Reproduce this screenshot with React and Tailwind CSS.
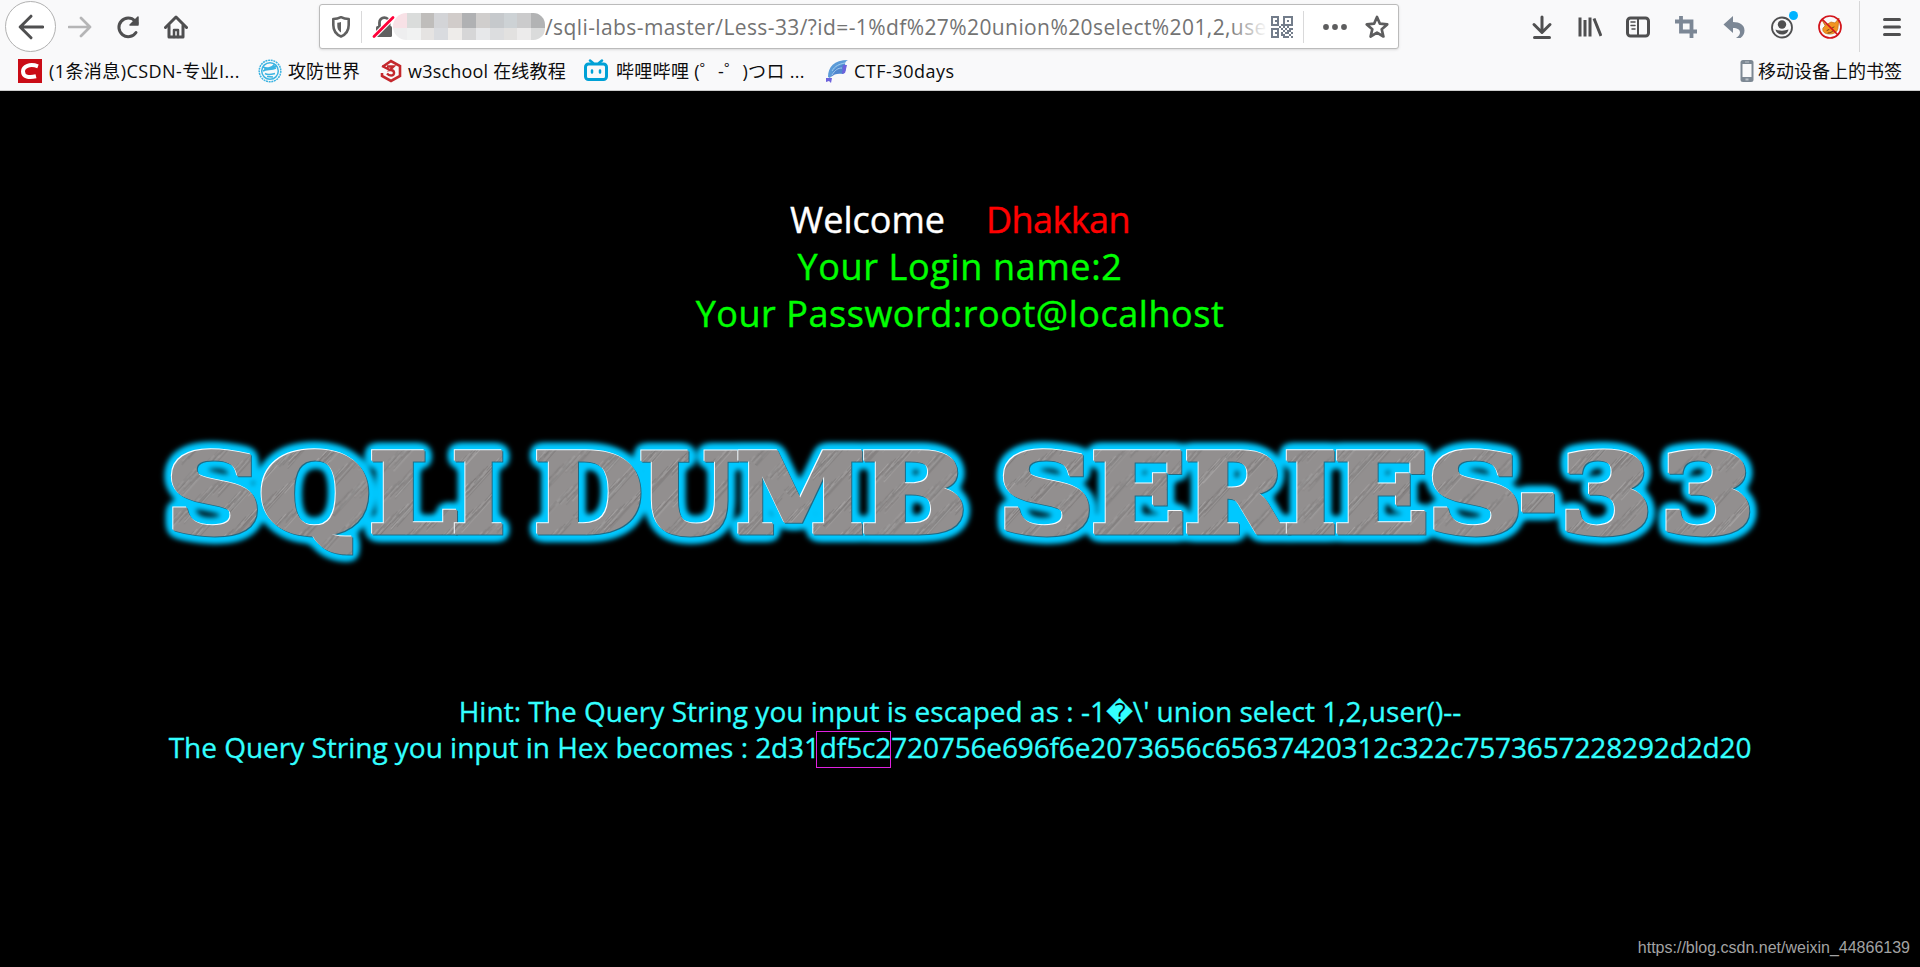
const ICON = "#4f4f50";

// x = left edge of the glyph box, w = width it is fitted to
const LETTERS = [
  { ch: "S", x: 166, w: 96 },
  { ch: "Q", x: 259, w: 112 },
  { ch: "L", x: 369, w: 88 },
  { ch: "I", x: 452, w: 53 },
  { ch: "D", x: 534, w: 109 },
  { ch: "U", x: 640, w: 98 },
  { ch: "M", x: 736, w: 129 },
  { ch: "B", x: 861, w: 106 },
  { ch: "S", x: 998, w: 96 },
  { ch: "E", x: 1091, w: 95 },
  { ch: "R", x: 1184, w: 103 },
  { ch: "I", x: 1284, w: 53 },
  { ch: "E", x: 1334, w: 95 },
  { ch: "S", x: 1427, w: 96 },
  { ch: "-", x: 1519, w: 38 },
  { ch: "3", x: 1560, w: 93 },
  { ch: "3", x: 1660, w: 95 },
];

// short scratches for the brushed metal fill
const SCRATCHES = Array.from({ length: 420 }, (_, i) => ({
  x: (i * 37.73) % 140,
  y: (i * 61.37) % 160,
  len: 14 + ((i * 29) % 44),
  light: (i * 13) % 5 < 2,
  o: 0.12 + ((i * 7) % 5) * 0.06,
}));

function Banner() {
  return (
    <svg
      className="block w-full h-[160px]"
      viewBox="0 420 1920 160"
      aria-label="SQLI DUMB SERIES-33"
    >
      <defs>
        <filter id="glow" x="-5%" y="-30%" width="110%" height="160%" colorInterpolationFilters="sRGB">
          <feGaussianBlur in="SourceAlpha" stdDeviation="5" />
          <feComponentTransfer>
            <feFuncA type="linear" slope="8" intercept="-0.1" />
          </feComponentTransfer>
          <feGaussianBlur stdDeviation="2" result="spread" />
          <feFlood floodColor="#00c8ff" />
          <feComposite in2="spread" operator="in" result="halo" />
          <feMerge>
            <feMergeNode in="halo" />
            <feMergeNode in="SourceGraphic" />
          </feMerge>
        </filter>
        <filter id="bevel" x="-10%" y="-10%" width="120%" height="120%" colorInterpolationFilters="sRGB">
          <feOffset in="SourceAlpha" dx="1" dy="1" result="a" />
          <feFlood floodColor="#1f6b85" />
          <feComposite in2="a" operator="in" result="dark" />
          <feOffset in="SourceAlpha" dx="-1.2" dy="-1.2" result="b" />
          <feFlood floodColor="#f4fbff" />
          <feComposite in2="b" operator="in" result="light" />
          <feMerge>
            <feMergeNode in="dark" />
            <feMergeNode in="light" />
            <feMergeNode in="SourceGraphic" />
          </feMerge>
        </filter>
        <pattern
          id="metal"
          width="140"
          height="160"
          patternUnits="userSpaceOnUse"
          patternTransform="rotate(42)"
        >
          <rect width="140" height="160" fill="#928f8f" />
          {SCRATCHES.map((s, i) => (
            <rect
              key={i}
              x={s.x}
              y={s.y}
              width="0.8"
              height={s.len}
              fill={s.light ? "#d4d1d1" : "#555252"}
              opacity={s.o}
            />
          ))}
        </pattern>
      </defs>
      <g
        fontFamily="'DejaVu Serif', serif"
        fontWeight="700"
        fontSize="109"
        fill="url(#metal)"
        stroke="url(#metal)"
        strokeWidth="4.8"
        filter="url(#glow)"
      >
        {LETTERS.map((l, i) => (
          <text
            key={i}
            x={l.x}
            y="531.5"
            textLength={l.w}
            lengthAdjust="spacingAndGlyphs"
            filter="url(#bevel)"
          >
            {l.ch}
          </text>
        ))}
      </g>
    </svg>
  );
}

function Icon({ children, className = "size-6", ...rest }) {
  return (
    <svg
      viewBox="0 0 24 24"
      className={`shrink-0 ${className}`}
      fill="none"
      stroke={ICON}
      strokeWidth="3"
      strokeLinecap="round"
      strokeLinejoin="round"
      {...rest}
    >
      {children}
    </svg>
  );
}

const MOSAIC_TOP = [
  "bg-[#f8e1e6]",
  "bg-[#dadcdb]",
  "bg-[#bfbdbb]",
  "bg-[#d3d4d7]",
  "bg-[#d1ccca]",
  "bg-[#b0b1b3]",
  "bg-[#d0cecd]",
  "bg-[#c6c9cc]",
  "bg-[#cdd2d5]",
  "bg-[#cbcbcc]",
  "bg-[#b2b3b4]",
];
const MOSAIC_BOTTOM = [
  "bg-[#eeeeef]",
  "bg-[#f1f2f2]",
  "bg-[#e5e3e2]",
  "bg-[#d9dbdf]",
  "bg-[#eeecea]",
  "bg-[#d6d6d7]",
  "bg-[#e7e8ea]",
  "bg-[#dcdddf]",
  "bg-[#e2e1e0]",
  "bg-[#ecebeb]",
  "bg-[#dadbdb]",
];

function HiddenHost() {
  return (
    <div className="w-[152px] -ml-[3px] h-[27px] shrink-0 overflow-hidden rounded-l-[14px] rounded-r-xl">
      <div className="flex h-[15px]">
        {MOSAIC_TOP.map((c, i) => (
          <div key={i} className={`flex-1 ${c}`} />
        ))}
      </div>
      <div className="flex h-3">
        {MOSAIC_BOTTOM.map((c, i) => (
          <div key={i} className={`flex-1 ${c}`} />
        ))}
      </div>
    </div>
  );
}

function QrIcon() {
  const rows = [
    "11110011111",
    "10010010001",
    "10110010101",
    "10010010001",
    "11110111111",
    "00001010100",
    "11110101011",
    "10010010110",
    "10110101101",
    "10010110010",
    "11110011101",
  ];
  return (
    <svg viewBox="0 0 11 11" className="size-[22px] shrink-0" fill="#737d8b">
      {rows.map((row, y) =>
        row
          .split("")
          .map((c, x) =>
            c === "1" ? (
              <rect key={`${x}-${y}`} x={x} y={y} width="1" height="1" />
            ) : null
          )
      )}
    </svg>
  );
}

function UrlBar() {
  return (
    <div className="flex items-center w-[1080px] h-[45px] ml-[131px] bg-white border border-[#bbb] rounded-[3px] shadow-sm shrink-0">
      <Icon className="size-6 ml-[9px]" strokeWidth="2.6" stroke="#606060">
        <path d="M12 2.2C9 3.8 6.500 4 4.300 4v6c0 6 3 9.500 7.700 11.500 4.700-2 7.700-5.500 7.700-11.500V4C17.500 4 15 3.800 12 2.200z" />
        <path d="M12 7v10.500C9.500 16 8.300 14 8.300 11V7.700c1.500 0 2.600-.3 3.700-.7z" fill="#606060" stroke="none" />
      </Icon>
      <div className="w-px h-8 ml-2 bg-[#d9d9da]" />
      <Icon className="size-6 ml-[10px]" stroke="#606060" strokeWidth="2.800">
        <path d="M7.500 11V7.500a4.800 4.800 0 0 1 9.600 0V11" />
        <rect x="4" y="11" width="16" height="11" rx="1.500" fill="#606060" stroke="none" />
        <path d="M2 21.500 21 2.500" stroke="#fff" strokeWidth="5" />
        <path d="M2 21.500 21 2.500" stroke="#ff0039" strokeWidth="2.800" />
      </Icon>
      <HiddenHost />
      <div className="relative w-[723px] h-10 overflow-hidden whitespace-nowrap leading-[41px] text-[21px] tracking-[0.4px] text-[#737373] shrink-0">
        /sqli-labs-master/Less-33/?id=-1%df%27%20union%20select%201,2,user
        <div className="absolute inset-y-0 right-0 w-10 bg-gradient-to-r from-transparent to-white" />
      </div>
      <div className="ml-[3px]">
        <QrIcon />
      </div>
      <div className="w-px h-8 ml-2.5 bg-[#d9d9da]" />
      <Icon className="size-6 ml-[19px]" fill="#5d5d5e" stroke="none">
        <circle cx="3" cy="12" r="2.900" />
        <circle cx="12" cy="12" r="2.900" />
        <circle cx="21" cy="12" r="2.900" />
      </Icon>
      <Icon className="size-6 ml-[18px]" strokeWidth="2.700" stroke="#5d5d5e">
        <path d="m12 2 2.900 6.700 7.300.7-5.500 4.800 1.700 7.300L12 17.600l-6.400 3.900 1.700-7.300L1.800 9.400l7.300-.7z" />
      </Icon>
    </div>
  );
}

function Toolbar() {
  return (
    <div className="flex items-center h-[53px] pl-[5px]">
      <div className="flex items-center justify-center size-[51px] rounded-full bg-white border border-[#b1b1b1] shrink-0">
        <Icon className="size-[26px]">
          <path d="M23 12H2M12 2 2 12l10 10" strokeWidth="2.700" />
        </Icon>
      </div>
      <Icon className="size-6 ml-3" stroke="#b5b5b6">
        <path d="M1 12h21M13 3l9 9-9 9" strokeWidth="2.700" />
      </Icon>
      <Icon className="size-6 ml-6">
        <path d="M20 17.500A9.300 9.300 0 1 1 19 6l2 2" />
        <path d="M22 2v8h-8z" fill={ICON} strokeWidth="1.500" />
      </Icon>
      <Icon className="size-6 ml-6">
        <path d="M1.500 12.500 12 2l10.500 10.500" />
        <path d="M5 10.500V22h14V10.500" />
        <path d="M10 22v-7h4v7" strokeWidth="2.500" />
      </Icon>
      <UrlBar />
      <div className="flex items-center gap-6 ml-[131px]">
        <Icon>
          <path d="M12 2v14M4 9.500l8 8 8-8M4.500 22.500h15" />
        </Icon>
        <Icon>
          <path d="M2 2.500v19M7 5v16.500M12 2.500v19" strokeLinecap="butt" />
          <path d="M16 3.500 23 21" strokeLinecap="butt" />
        </Icon>
        <Icon>
          <rect x="1.500" y="3" width="21" height="18" rx="3" />
          <path d="M12 3v18" strokeWidth="2" />
          <path d="M5 7h4M5 10.500h4M6 14h3" strokeWidth="1.500" />
        </Icon>
        <Icon stroke="#7c8795" strokeLinecap="butt" strokeLinejoin="miter">
          <path d="M7 1v15.500h16M1 6.500h16.500V23" strokeWidth="3.800" />
        </Icon>
        <Icon fill="#7c8795" stroke="none">
          <path d="M11 1v6c7 0 11.500 3 11.500 8.500 0 3-1.500 5.500-4 7.500H14c2.500-1.500 4-3.500 4-5.500 0-3-2.500-4.500-7-4.500v5L1.500 9.500z" />
        </Icon>
        <div className="relative">
          <Icon>
            <circle cx="12" cy="12.500" r="10" strokeWidth="1.800" />
            <circle cx="12" cy="9.500" r="4.200" fill={ICON} stroke="none" />
            <path d="M5.500 14.500c4 1.500 9 1.500 13 0-.5 3-3 5-6.500 5s-6-2-6.500-5z" fill={ICON} stroke="none" />
          </Icon>
          <div className="absolute -top-[4px] left-[19px] size-[9px] rounded-full bg-[#00b3ff]" />
        </div>
        <Icon>
          <path
            d="M4 5l4 5 5-3 4 1 4-5-1 9c0 4-3 7-8 7s-8-2-7-6l2-2z"
            fill="#f29420"
            stroke="#c8761b"
            strokeWidth="0.800"
          />
          <path d="M9 15.500l2-1M14 13l2-1M10 18c2 0 4-1 5-2" stroke="#74451a" strokeWidth="1" />
          <circle cx="12" cy="12" r="11" stroke="#d3141b" strokeWidth="1.700" />
          <path d="M4.500 4.500l15 15" stroke="#d3141b" strokeWidth="1.700" />
        </Icon>
      </div>
      <div className="w-px h-[51px] ml-[17px] bg-[#d7d7d8]" />
      <Icon className="size-6 ml-5">
        <path d="M4.500 4.500h15M4.500 12h15M4.500 19.500h15" />
      </Icon>
    </div>
  );
}

function Bookmarks() {
  return (
    <div className="flex items-center h-9 pl-[18px] pr-[18px] text-lg leading-9 text-[#0c0c0d] whitespace-nowrap">
      <svg viewBox="0 0 24 24" className="size-6 shrink-0">
        <rect width="24" height="24" fill="#ca0c16" />
        <path d="M20 7.300C12 4.500 5 7 5 12.500c0 5.500 6 6.500 13 4.800" fill="none" stroke="#fff" strokeWidth="4" />
      </svg>
      <div className="w-[216px] pl-[7px] tracking-[0.42px]">(1条消息)CSDN-专业I...</div>
      <svg viewBox="0 0 24 24" className="size-6 shrink-0" fill="none" stroke="#3cb4e2">
        <circle cx="12" cy="12" r="10.800" strokeWidth="1.500" strokeDasharray="2 .7" />
        <circle cx="12" cy="12" r="8.300" strokeWidth="1.500" />
        <path d="M5 8c4 2 9 1 12-3M5 12c3-2 8-1 13-3M7 14.500c3 2 6 1 10 0M9 17.500l6 .5M6 10c3 1 7 0 12-3" strokeWidth="1.600" />
      </svg>
      <div className="w-[97px] pl-[6px]">攻防世界</div>
      <svg viewBox="0 0 24 24" className="size-6 shrink-0" fill="none" stroke="#c4282d" strokeWidth="2.600">
        <path d="M4 7.500 12 2l9 5v10l-9 5-9-5v-3" />
        <path d="M3 7l8 4M8 7.500h6.500L11 11c5-.5 5.500 5.500 1 5.500-2 0-3-.8-4-2" strokeWidth="2.400" />
      </svg>
      <div className="w-[181px] pl-[5px] tracking-[0.2px]">w3school 在线教程</div>
      <svg viewBox="0 0 24 24" className="size-6 shrink-0" fill="none" stroke="#00a1d6" strokeWidth="3" strokeLinecap="round">
        <rect x="1.500" y="5" width="21" height="15.500" rx="3" />
        <path d="M6 1.500 9 4M18 1.500 15 4" strokeWidth="2.500" />
        <path d="M8 11.500v2M16 11.500v2" strokeWidth="2.500" />
      </svg>
      <div className="w-[217px] pl-2 tracking-[0.3px]">哔哩哔哩 (゜-゜)つロ ...</div>
      <svg viewBox="0 0 24 24" className="size-6 shrink-0">
        <path d="M3 18C3 8 9 1 23 1c-2 1-3 2-3 4 2 4 1 8-2 10l-1-4c-5 0-9 3-12 8z" fill="#5b9bd8" />
        <path d="M6 18C8 11 12 7 20 5l-2 10c-5-1-9 0-12 3z" fill="#4f86cf" />
        <path d="M7 12c3-5 7-7 13-8M7 16c3-5 6-7 10-7" stroke="#a4cdee" strokeWidth="1" fill="none" />
        <path d="M18 6l4 0-2 8-3 1zM1 19l6 0-1 5-2-2-3 1z" fill="#6d62dc" />
      </svg>
      <div className="pl-[5px] tracking-[0.5px]">CTF-30days</div>
      <svg viewBox="0 0 14 22" className="w-[14px] h-[22px] ml-auto shrink-0">
        <rect x="0.500" width="13" height="22" rx="2.500" fill="#7d8893" />
        <rect x="2.500" y="4" width="9" height="13" fill="#f9f9fa" />
        <rect x="5" y="1.500" width="4" height="1" fill="#b9c0c7" />
        <rect x="5.500" y="18.500" width="3" height="2" fill="#b9c0c7" />
      </svg>
      <div className="pl-1">移动设备上的书签</div>
    </div>
  );
}

export default function App() {
  return (
    <div className="flex flex-col w-[1920px] h-[967px] overflow-hidden bg-black font-['Open_Sans','Noto_Sans_CJK_SC',sans-serif]">
      <header className="h-[91px] shrink-0 bg-[#f9f9fa] border-b border-[#ccc]">
        <Toolbar />
        <Bookmarks />
      </header>

      <main className="flex flex-col flex-1">
        <div className="mt-[105px] text-center text-4xl leading-[47px] text-[#00ff00] whitespace-nowrap [-webkit-text-stroke:0.4px]">
          <div className="flex justify-center gap-[41px]">
            <span className="text-white">Welcome</span>
            <span className="text-[#ff0000] tracking-[-0.6px]">Dhakkan</span>
          </div>
          <div className="tracking-[0.65px]">Your Login name:2</div>
          <div className="tracking-[0.54px]">Your Password:root@localhost</div>
        </div>

        <div className="mt-[83px]">
          <Banner />
        </div>

        <div className="mt-[113px] text-center text-[28px] leading-9 text-[#33ffff] whitespace-nowrap [-webkit-text-stroke:0.3px]">
          <div className="tracking-[0.03px]">
            Hint: The Query String you input is escaped as : -1
            <span className="font-['DejaVu_Sans'] text-[26px] leading-none">�</span>
            \' union select 1,2,user()--
          </div>
          <div className="tracking-[-0.14px]">
            <span className="tracking-[-0.02px]">The Query String you input in Hex becomes : </span>
            2d31
            <span className="relative">
              df5c2
              <span className="absolute -left-1 right-0 top-[3px] h-[37px] border border-[#e022e0]" />
            </span>
            720756e696f6e2073656c65637420312c322c7573657228292d2d20
          </div>
        </div>

        <div className="mt-auto pb-[9px] pr-[10px] text-right font-['Liberation_Sans',sans-serif] text-base leading-5 text-[#a3a3a3]">
          https://blog.csdn.net/weixin_44866139
        </div>
      </main>
    </div>
  );
}
